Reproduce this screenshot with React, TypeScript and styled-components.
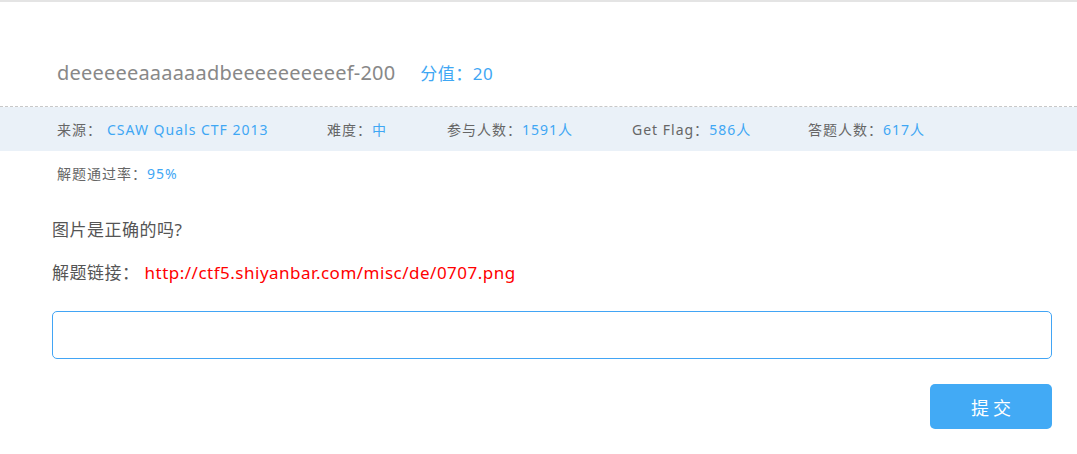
import React from "react";
import styled, { createGlobalStyle } from "styled-components";

const Global = createGlobalStyle`
  html, body { margin: 0; padding: 0; background: #fff; }
  body { font-family: "Noto Sans", "Noto Sans CJK SC", sans-serif; }
`;

const Page = styled.div`
  width: 1077px;
  height: 454px;
  border-top: 2px solid #e4e4e4;
  box-sizing: border-box;
  overflow: hidden;
`;

const Header = styled.div`
  display: flex;
  align-items: baseline;
  gap: 25px;
  padding: 56px 0 0 57px;
  height: 105px;
  box-sizing: border-box;
  border-bottom: 1px dashed #c8c8c8;
`;

const Title = styled.h1`
  margin: 0;
  font-size: 20px;
  line-height: 30px;
  letter-spacing: 0.2px;
  font-weight: normal;
  color: #888;
`;

const Score = styled.span`
  font-size: 17px;
  letter-spacing: 0.5px;
  color: #3fa7f4;
`;

const InfoBar = styled.div`
  display: flex;
  align-items: center;
  height: 44px;
  background: #eaf1f8;
  padding-left: 57px;
`;

const InfoItem = styled.div<{ $w: number }>`
  width: ${(p) => p.$w}px;
  font-size: 14px;
  letter-spacing: 1px;
  color: #666;
  white-space: nowrap;
`;

const Value = styled.span<{ $gap?: number }>`
  color: #3fa7f4;
  margin-left: ${(p) => p.$gap ?? 0}px;
`;

const Rate = styled.div`
  padding: 13px 0 0 57px;
  font-size: 14px;
  line-height: 20px;
  letter-spacing: 1px;
  color: #666;
`;

const Body = styled.div`
  padding: 0 25px 0 52px;
`;

const Question = styled.p`
  margin: 34px 0 0;
  font-size: 17px;
  line-height: 24px;
  letter-spacing: 0.5px;
  color: #555;
`;

const LinkLine = styled.p`
  margin: 19px 0 0;
  font-size: 17px;
  line-height: 24px;
  letter-spacing: 0.5px;
  color: #555;
`;

const Link = styled.a`
  color: #ff0000;
  text-decoration: none;
  margin-left: 5px;
`;

const Input = styled.input`
  display: block;
  margin-top: 26px;
  width: 1000px;
  height: 48px;
  box-sizing: border-box;
  border: 1px solid #42a5f5;
  border-radius: 5px;
  outline: none;
  font-size: 16px;
  padding: 0 12px;
`;

const Actions = styled.div`
  display: flex;
  justify-content: flex-end;
  width: 1000px;
  margin-top: 25px;
`;

const Button = styled.button`
  width: 122px;
  height: 45px;
  border: none;
  border-radius: 5px;
  background: #42aaf5;
  color: #fff;
  font-size: 18px;
  letter-spacing: 4px;
  padding: 0 0 0 4px;
  font-family: "Noto Sans CJK SC", sans-serif;
  cursor: pointer;
`;

export default function App() {
  return (
    <Page>
      <Global />
      <Header>
        <Title>deeeeeeaaaaaadbeeeeeeeeeef-200</Title>
        <Score>分值：20</Score>
      </Header>
      <InfoBar>
        <InfoItem $w={270}>
          来源：<Value $gap={5}>CSAW Quals CTF 2013</Value>
        </InfoItem>
        <InfoItem $w={120}>
          难度：<Value>中</Value>
        </InfoItem>
        <InfoItem $w={185}>
          参与人数：<Value>1591人</Value>
        </InfoItem>
        <InfoItem $w={176}>
          Get Flag：<Value>586人</Value>
        </InfoItem>
        <InfoItem $w={150}>
          答题人数：<Value>617人</Value>
        </InfoItem>
      </InfoBar>
      <Rate>
        解题通过率：<Value>95%</Value>
      </Rate>
      <Body>
        <Question>图片是正确的吗?</Question>
        <LinkLine>
          解题链接：
          <Link href="#">http://ctf5.shiyanbar.com/misc/de/0707.png</Link>
        </LinkLine>
        <Input type="text" />
        <Actions>
          <Button>提交</Button>
        </Actions>
      </Body>
    </Page>
  );
}
